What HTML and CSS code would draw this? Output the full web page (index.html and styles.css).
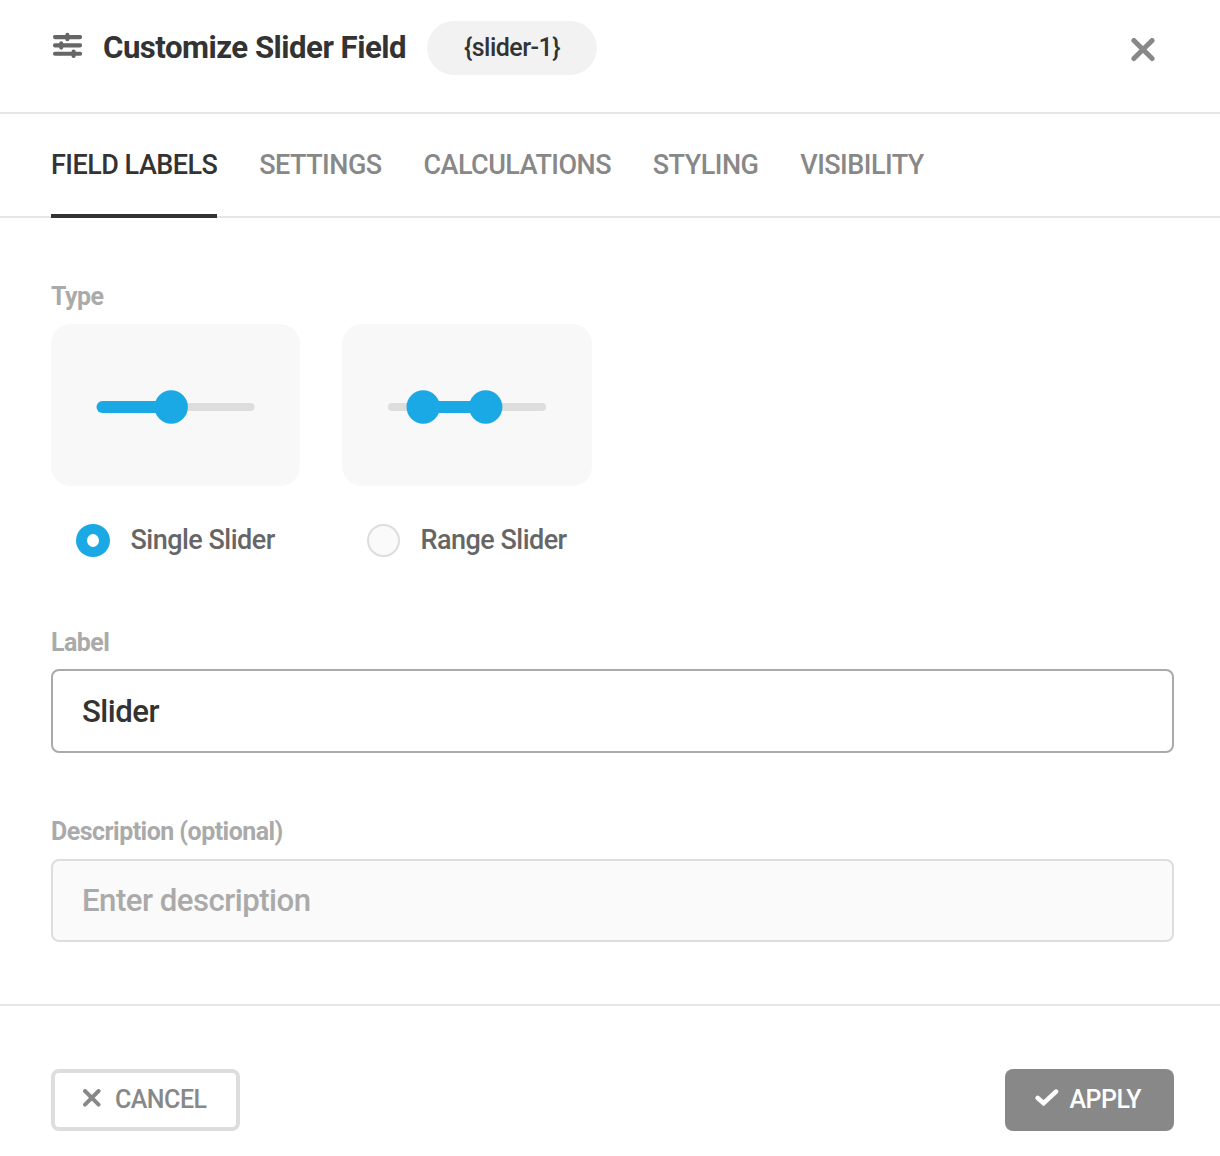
FILE: index.html
```
<!DOCTYPE html>
<html lang="en">
<head>
<meta charset="utf-8">
<title>Customize Slider Field</title>
<link rel="stylesheet" href="styles.css">
</head>
<body>
<main class="dialog">
  <header class="header">
    <svg class="header-icon" width="30" height="26" viewBox="0 0 30 26">
      <path d="M3 5.1H28M3 13.4H28M3 21.8H28" stroke-width="4.1"/>
      <path d="M15.4 2.9V7.3M9.2 11.2V15.6M21.6 19.6V24" stroke-width="4.1"/>
    </svg>
    <h1 class="title">Customize Slider Field</h1>
    <span class="slug">{slider-1}</span>
    <button class="close" aria-label="Close">
      <svg width="24" height="24" viewBox="0 0 24 24"><path d="M2.9 2.4L21.1 20.6M21.1 2.4L2.9 20.6" stroke-width="5"/></svg>
    </button>
  </header>
  <nav class="tabs">
    <a class="tab active">FIELD LABELS</a>
    <a class="tab">SETTINGS</a>
    <a class="tab">CALCULATIONS</a>
    <a class="tab">STYLING</a>
    <a class="tab">VISIBILITY</a>
  </nav>
  <section class="content">
    <div class="label">Type</div>
    <div class="types">
      <label class="type">
        <span class="preview">
          <svg width="161" height="36" viewBox="0 0 161 36">
            <rect class="track" x="60" y="14" width="99.5" height="8" rx="4"/>
            <rect class="fill" x="1.5" y="12" width="80" height="12" rx="6"/>
            <circle class="fill" cx="76.2" cy="18" r="16.7"/>
          </svg>
        </span>
        <span class="option"><span class="radio checked"></span><span>Single Slider</span></span>
      </label>
      <label class="type range">
        <span class="preview">
          <svg width="160" height="36" viewBox="0 0 160 36">
            <rect class="track" x="1" y="14" width="158" height="8" rx="4"/>
            <rect class="fill" x="36" y="12" width="63" height="12"/>
            <circle class="fill" cx="36.2" cy="18" r="16.7"/>
            <circle class="fill" cx="98.7" cy="18" r="16.7"/>
          </svg>
        </span>
        <span class="option"><span class="radio"></span><span>Range Slider</span></span>
      </label>
    </div>
    <label class="label name-label" for="name">Label</label>
    <input class="input focused" id="name" value="Slider">
    <label class="label description-label" for="description">Description (optional)</label>
    <input class="input" id="description" placeholder="Enter description">
  </section>
  <footer class="footer">
    <button class="button cancel">
      <svg width="18" height="18" viewBox="0 0 18 18"><path d="M2 2L15.6 15.6M15.6 2L2 15.6" stroke-width="3.9"/></svg>
      <span>CANCEL</span>
    </button>
    <button class="button apply">
      <svg width="24" height="18" viewBox="0 0 24 18"><path d="M2.7 9L8.6 14.2L21 2.6" stroke-width="4.6" stroke-linejoin="miter"/></svg>
      <span>APPLY</span>
    </button>
  </footer>
</main>
</body>
</html>
```
FILE: styles.css
```
* { box-sizing: border-box; }
body {
  margin: 0;
  background: #fff;
  color: #333;
  font-family: Roboto, sans-serif;
  font-weight: 500;
  letter-spacing: -0.52px;
}
button, input { font: inherit; letter-spacing: inherit; margin: 0; }
svg { display: block; flex: none; fill: none; stroke-linecap: round; stroke-linejoin: round; }
.dialog { height: 1156px; overflow: hidden; }

.header {
  display: flex;
  align-items: flex-start;
  height: 114px;
  padding: 21px 65px 0 52px;
  border-bottom: 2px solid #e6e6e6;
}
.header-icon { margin-top: 11px; stroke: #666; }
.title {
  margin: 0 21px 0 21px;
  font-size: 31.2px;
  line-height: 53px;
  font-weight: 700;
  white-space: nowrap;
}
.slug {
  width: 170px;
  height: 54px;
  border-radius: 27px;
  background: #f2f2f2;
  font-size: 25px;
  line-height: 54px;
  text-align: center;
}
.close {
  margin: 17px 0 0 auto;
  padding: 0;
  border: 0;
  background: none;
  stroke: #888;
}

.tabs {
  display: flex;
  gap: 41.8px;
  height: 104px;
  padding: 0 51px;
  border-bottom: 2px solid #e6e6e6;
}
.tab {
  height: 104px;
  font-size: 27px;
  line-height: 102px;
  color: #888;
  white-space: nowrap;
}
.tab.active { color: #333; border-bottom: 4px solid #333; }

.content {
  height: 788px;
  padding: 64px 46px 0 51px;
  border-bottom: 2px solid #e6e6e6;
}
.label {
  display: block;
  height: 42px;
  font-size: 24.96px;
  line-height: 30px;
  font-weight: 700;
  color: #aaa;
}
.types { display: flex; gap: 42px; }
.type { width: 249px; }
.type.range { width: 250px; }
.preview {
  display: flex;
  align-items: center;
  justify-content: center;
  height: 162px;
  padding-top: 4px;
  border-radius: 20px;
  background: #f8f8f8;
}
.track { fill: #ddd; }
.fill { fill: #1aa9e5; }
.option {
  display: flex;
  align-items: center;
  gap: 20.5px;
  margin-top: 38px;
  padding-left: 25px;
  font-size: 27px;
  line-height: 33px;
  color: #666;
  white-space: nowrap;
}
.radio {
  flex: none;
  width: 33px;
  height: 33px;
  border: 2px solid #ddd;
  border-radius: 50%;
  background: #fafafa;
}
.radio.checked {
  width: 34px;
  border: solid #1aa9e5;
  border-width: 10px 11px;
  background: #fff;
}
.name-label { height: 41px; margin-top: 71px; }
.description-label { margin-top: 64px; }
.input {
  display: block;
  width: 100%;
  height: 83px;
  padding: 0 29px;
  border: 2px solid #ddd;
  border-radius: 8px;
  background: #fafafa;
  color: #333;
  font-size: 31.2px;
}
.input.focused { height: 84px; border-color: #aaa; background: #fff; }
.input::placeholder { color: #aaa; opacity: 1; }

.footer {
  display: flex;
  justify-content: space-between;
  padding: 63px 46px 0 51px;
}
.button {
  display: flex;
  align-items: center;
  height: 62px;
  padding: 0 0 2px;
  border-radius: 8px;
  font-size: 25px;
}
.cancel {
  width: 189px;
  gap: 14px;
  padding-left: 28px;
  border: 4px solid #ddd;
  background: #fff;
  color: #888;
  stroke: #888;
}
.cancel svg, .apply svg { margin-top: -2px; }
.apply {
  width: 169px;
  gap: 10.5px;
  padding-left: 30px;
  border: 0;
  background: #888;
  color: #fff;
  stroke: #fff;
}
.button span { stroke: none; }
```
